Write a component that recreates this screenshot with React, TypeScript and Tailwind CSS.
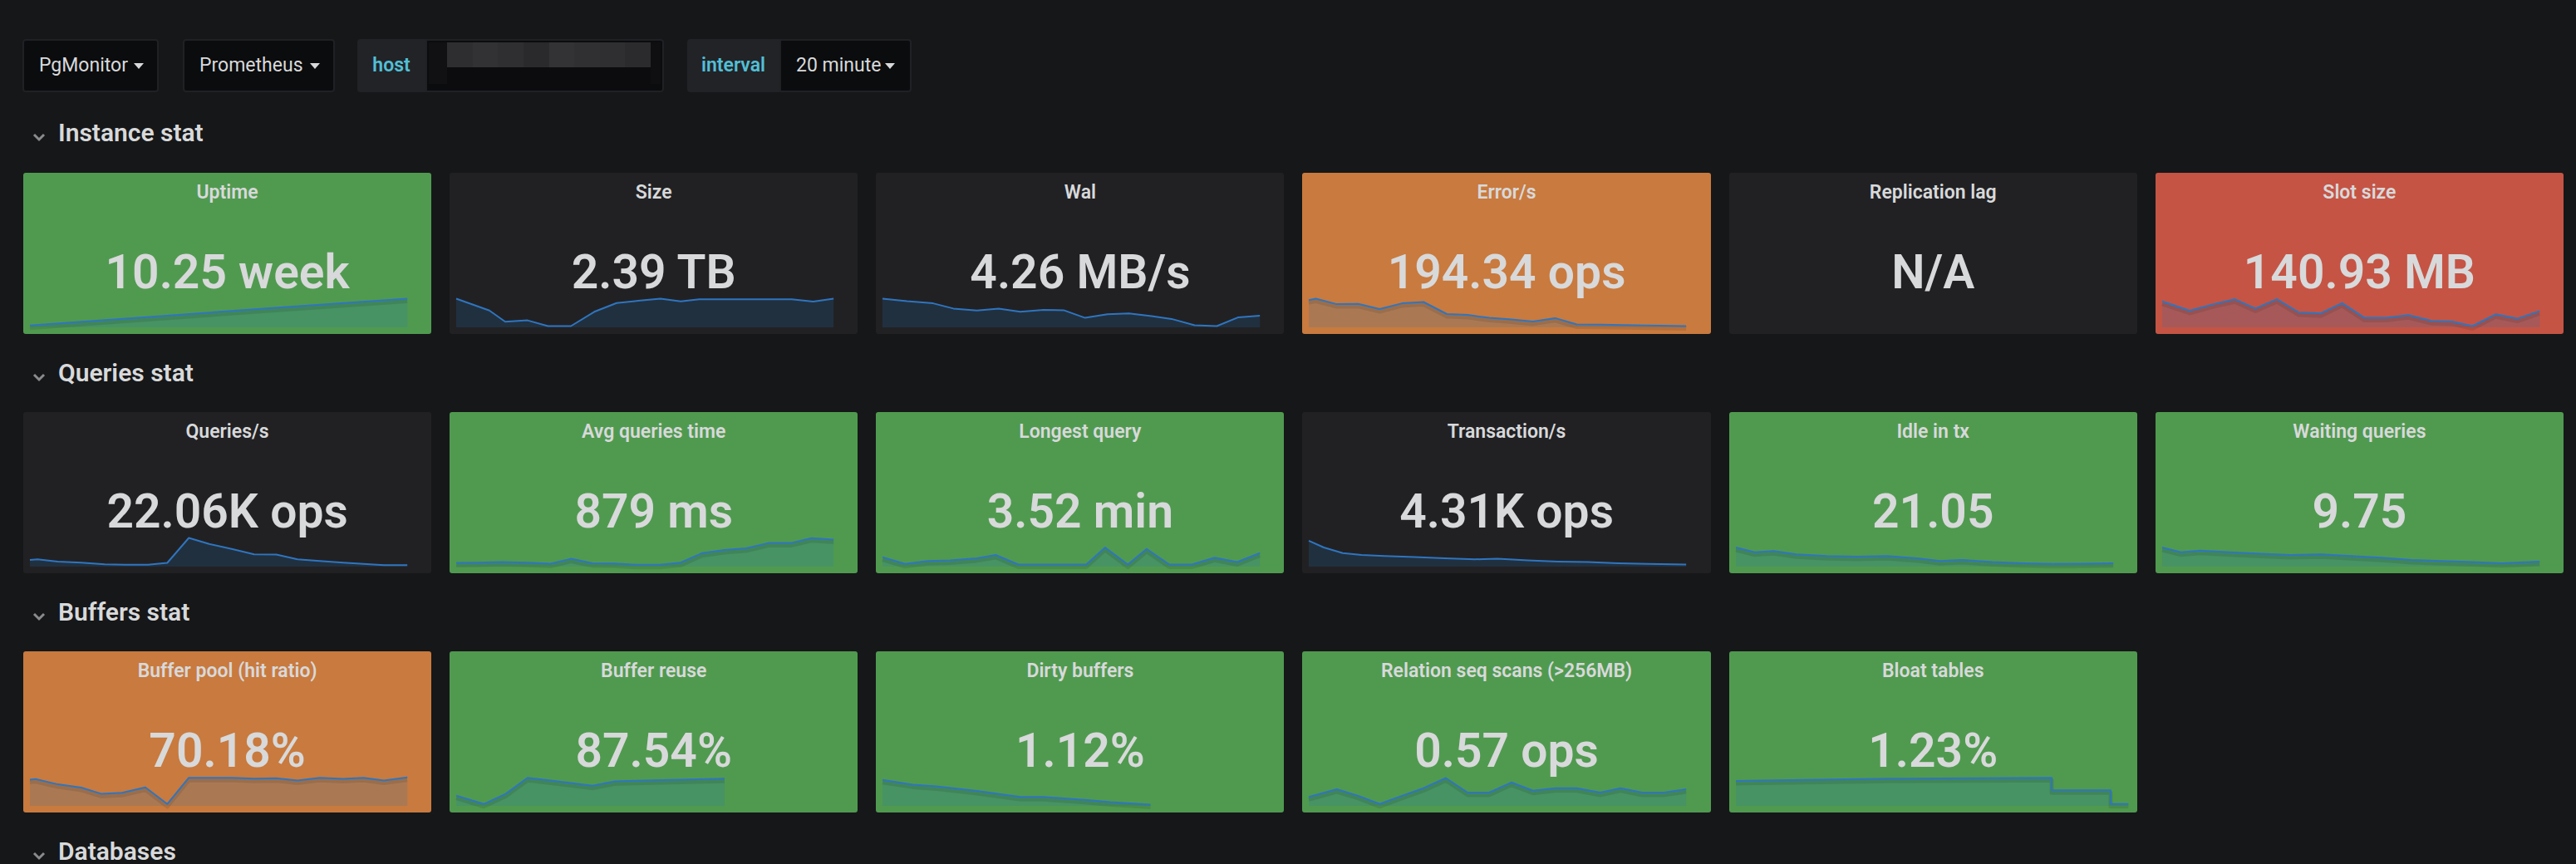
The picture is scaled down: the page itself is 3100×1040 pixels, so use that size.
import React from "react";

type Pt = [number, number];
type Card = { t: string; v: string; c: "green" | "orange" | "red" | "dark"; s?: Pt[] };

const bg: Record<Card["c"], string> = {
  green: "bg-[#509a50]",
  orange: "bg-[#c97a3e]",
  red: "bg-[#c55444]",
  dark: "bg-[#212124]",
};

const sections: { title: string; cards: Card[] }[] = [
  {
    title: "Instance stat",
    cards: [
      { t: "Uptime", v: "10.25 week", c: "green", s: [[0, 98], [31.6, 67], [65, 33], [100, 0]] },
      {
        t: "Size",
        v: "2.39 TB",
        c: "dark",
        s: [[0, 0], [8.8, 43], [13, 84], [18.9, 79], [24.3, 100], [30.4, 100], [36.6, 48], [42.5, 16], [48.2, 8], [54.1, 0], [59.5, 10], [64.4, 2], [88.9, 2], [94.6, 11], [100, 0]],
      },
      {
        t: "Wal",
        v: "4.26 MB/s",
        c: "dark",
        s: [[0, 0], [6.5, 9.5], [13.4, 17], [18.8, 36], [25, 43], [30.8, 36], [36.5, 48], [42.7, 41], [48, 42], [53.7, 70], [59.6, 57], [65.3, 54], [71.3, 64], [76.6, 74], [82.7, 97], [88.6, 100], [94.3, 68], [100, 62]],
      },
      {
        t: "Error/s",
        v: "194.34 ops",
        c: "orange",
        s: [[0, 5], [1.9, 0], [7.4, 20], [13.1, 19], [18.8, 38], [24.7, 17], [30.4, 12], [36.6, 56], [42.1, 59], [47.8, 70], [53.7, 76], [59.4, 83], [65.3, 71], [71, 94], [77.2, 95], [89.5, 98], [100, 100]],
      },
      { t: "Replication lag", v: "N/A", c: "dark" },
      {
        t: "Slot size",
        v: "140.93 MB",
        c: "red",
        s: [[0, 10], [7.3, 44], [13.4, 21], [19.2, 2], [24.7, 36], [30.4, 2], [36.2, 50], [42, 54], [47.7, 16], [53.6, 70], [59.4, 70], [65.2, 60], [71.4, 81], [76.8, 83], [82.2, 100], [88.4, 57], [94.1, 73], [100, 45]],
      },
    ],
  },
  {
    title: "Queries stat",
    cards: [
      {
        t: "Queries/s",
        v: "22.06K ops",
        c: "dark",
        s: [[0, 80], [2, 78], [7.4, 86], [13.6, 90], [19.8, 96], [25.2, 98], [31.3, 98], [36.4, 91], [42.1, 0], [47.5, 22], [53.7, 41], [59.4, 60], [65.3, 61], [70.9, 78], [76.8, 84], [83, 90], [88.4, 95], [93.8, 99], [100, 99]],
      },
      {
        t: "Avg queries time",
        v: "879 ms",
        c: "green",
        s: [[0, 91], [5.7, 90], [11.9, 88], [18.9, 90], [25, 94], [30.4, 76], [36.1, 92], [42, 93], [47.9, 98], [54, 98], [59.5, 90], [65.2, 55], [71.1, 44], [76.8, 38], [83, 18], [88.9, 18], [94.1, 1], [100, 6]],
      },
      {
        t: "Longest query",
        v: "3.52 min",
        c: "green",
        s: [[0, 70], [6, 95], [12, 84], [18, 82], [25, 74], [30, 62], [36, 97], [42, 97], [48, 97], [54, 97], [59, 35], [65, 97], [70, 40], [76, 97], [82, 97], [88, 72], [94, 88], [100, 55]],
      },
      {
        t: "Transaction/s",
        v: "4.31K ops",
        c: "dark",
        s: [[0, 10], [4, 35], [9, 55], [14, 62], [20, 66], [28, 70], [36, 74], [44, 78], [50, 76], [58, 82], [66, 86], [74, 88], [82, 92], [90, 95], [100, 97]],
      },
      {
        t: "Idle in tx",
        v: "21.05",
        c: "green",
        s: [[0, 35], [5, 52], [10, 48], [16, 60], [24, 66], [32, 68], [40, 66], [48, 74], [54, 84], [60, 80], [68, 88], [76, 92], [84, 95], [92, 94], [100, 92]],
      },
      {
        t: "Waiting queries",
        v: "9.75",
        c: "green",
        s: [[0, 35], [5, 52], [10, 46], [18, 52], [26, 58], [34, 62], [42, 60], [50, 66], [58, 72], [66, 80], [74, 84], [82, 88], [90, 92], [100, 86]],
      },
    ],
  },
  {
    title: "Buffers stat",
    cards: [
      {
        t: "Buffer pool (hit ratio)",
        v: "70.18%",
        c: "orange",
        s: [[0, 9], [1.5, 7], [7.4, 26], [13.6, 38], [19, 61], [24.4, 57], [30.6, 37], [36.4, 98], [42.1, 2], [47.5, 2], [53.7, 2], [59.4, 5], [65.3, 4], [70.9, 12], [76.8, 2], [83, 6], [88.4, 2], [93.8, 12], [100, 1]],
      },
      {
        t: "Buffer reuse",
        v: "87.54%",
        c: "green",
        s: [[0, 67], [7.3, 98], [13.1, 61], [18.9, 2], [25, 12], [30.4, 21], [36.1, 31], [42, 15], [47.9, 13], [71.1, 5]],
      },
      {
        t: "Dirty buffers",
        v: "1.12%",
        c: "green",
        s: [[0, 10], [8, 27], [14.2, 33], [25, 50], [36.5, 72], [42.7, 72], [54.2, 83], [60.4, 91], [71, 100]],
      },
      {
        t: "Relation seq scans (>256MB)",
        v: "0.57 ops",
        c: "green",
        s: [[0, 72], [7.4, 44], [13.1, 68], [18.8, 98], [24.7, 68], [30.4, 40], [36.3, 3], [42.1, 56], [47.8, 56], [53.7, 19], [59.4, 49], [65.3, 40], [71, 40], [77.2, 56], [82.6, 40], [88.4, 56], [94.1, 56], [100, 44]],
      },
      {
        t: "Bloat tables",
        v: "1.23%",
        c: "green",
        s: [[0, 14], [40.8, 5], [83.7, 2], [83.7, 48], [99.3, 48], [99.3, 98], [104, 98]],
      },
    ],
  },
];

function Spark({ pts, colored }: { pts: Pt[]; colored: boolean }) {
  const W = 455;
  const H = 36;
  const xy = pts.map(([x, y]) => [(x / 100) * W, 1.5 + (y / 100) * (H - 3)] as [number, number]);
  const line = xy.map(([x, y]) => `${x.toFixed(1)},${y.toFixed(1)}`).join(" ");
  const area = `M${xy[0][0].toFixed(1)},${H} L${line.replace(/ /g, " L")} L${xy[xy.length - 1][0].toFixed(1)},${H} Z`;
  return (
    <svg viewBox={`0 0 ${W} ${H}`} preserveAspectRatio="none" className="block w-full h-full overflow-visible">
      <path d={area} fill="rgba(31,118,189,0.18)" />
      {colored && (
        <polyline
          points={line}
          transform="translate(0,3)"
          fill="none"
          stroke="rgba(0,0,0,0.09)"
          strokeWidth={5}
          strokeLinejoin="round"
        />
      )}
      <polyline points={line} fill="none" stroke="#2f75bf" strokeWidth={2} strokeLinejoin="round" />
    </svg>
  );
}

function StatCard({ card }: { card: Card }) {
  return (
    <div className={`${bg[card.c]} rounded-[3px] h-[194px] flex flex-col text-[#d8d9da]`}>
      <div className="pt-[12px] text-center text-[23px] leading-[24px] font-semibold whitespace-nowrap">{card.t}</div>
      <div className="mt-[54px] text-center text-[57px] leading-[59px] font-semibold whitespace-nowrap">{card.v}</div>
      <div className="mt-auto ml-[8px] mr-[29px] mb-[8px] h-[36px]">
        {card.s && <Spark pts={card.s} colored={card.c !== "dark"} />}
      </div>
    </div>
  );
}

function Chevron() {
  return (
    <svg width="16" height="12" viewBox="0 0 16 12" className="block mt-[10px]">
      <polyline points="2,3 8,9 14,3" fill="none" stroke="#8a8b8e" strokeWidth={3} />
    </svg>
  );
}

function Caret() {
  return (
    <svg width="12" height="7" viewBox="0 0 12 7" className="block">
      <path d="M0 0 L12 0 L6 7 Z" fill="#d8d9da" />
    </svg>
  );
}

function SectionHeader({ title, first }: { title: string; first?: boolean }) {
  return (
    <div className={`${first ? "h-[97px]" : "h-[94px]"} flex items-center pl-[11px] gap-[15px]`}>
      <Chevron />
      <span className="text-[30px] font-semibold text-[#d8d9da] leading-none">{title}</span>
    </div>
  );
}

export default function App() {
  const blocks = ["#2e2e31", "#323235", "#2f2f32", "#2a2a2d", "#333336", "#303033", "#2f2f32", "#2b2b2e"];
  return (
    <div className="min-h-screen bg-[#161719] font-['Roboto','Liberation_Sans',sans-serif] pl-[28px] pr-[15px] overflow-hidden">
      <div className="pt-[47px] flex items-stretch h-[111px] -ml-[1px] text-[23px] text-[#d8d9da]">
        <div className="w-[164px] flex items-center justify-between pl-[18px] pr-[16px] bg-[#0b0c0e] border-2 border-[#202124] rounded-[4px]">
          <span>PgMonitor</span>
          <Caret />
        </div>
        <div className="ml-[29px] w-[183px] flex items-center justify-between pl-[18px] pr-[16px] bg-[#0b0c0e] border-2 border-[#202124] rounded-[4px]">
          <span>Prometheus</span>
          <Caret />
        </div>
        <div className="ml-[27px] flex">
          <div className="w-[82px] flex items-center justify-center bg-[#222326] rounded-l-[4px] text-[#52bfd6] font-semibold">host</div>
          <div className="w-[287px] bg-[#0b0c0e] border-2 border-[#202124] rounded-r-[4px] p-[2px] flex">
            <div className="w-[22px] h-[50px] bg-[#111113]" />
            <div className="flex-1 flex flex-col">
              <div className="flex h-[30px]">
                {blocks.map((c, i) => (
                  <div key={i} className="flex-1" style={{ background: c }} />
                ))}
              </div>
              <div className="flex-1 bg-[#0c0c0e]" />
            </div>
            <div className="w-[12px] h-[50px] bg-[#0f0f11]" />
          </div>
        </div>
        <div className="ml-[28px] flex">
          <div className="w-[111px] flex items-center justify-center bg-[#222326] rounded-l-[4px] text-[#52bfd6] font-semibold">interval</div>
          <div className="w-[159px] flex items-center justify-between pl-[18px] pr-[18px] bg-[#0b0c0e] border-2 border-[#202124] rounded-r-[4px]">
            <span>20 minute</span>
            <Caret />
          </div>
        </div>
      </div>

      {sections.map((sec, i) => (
        <div key={sec.title}>
          <SectionHeader title={sec.title} first={i === 0} />
          <div className="grid grid-cols-6 gap-x-[22px]">
            {sec.cards.map((c) => (
              <StatCard key={c.t} card={c} />
            ))}
          </div>
        </div>
      ))}
      <SectionHeader title="Databases" />
    </div>
  );
}
